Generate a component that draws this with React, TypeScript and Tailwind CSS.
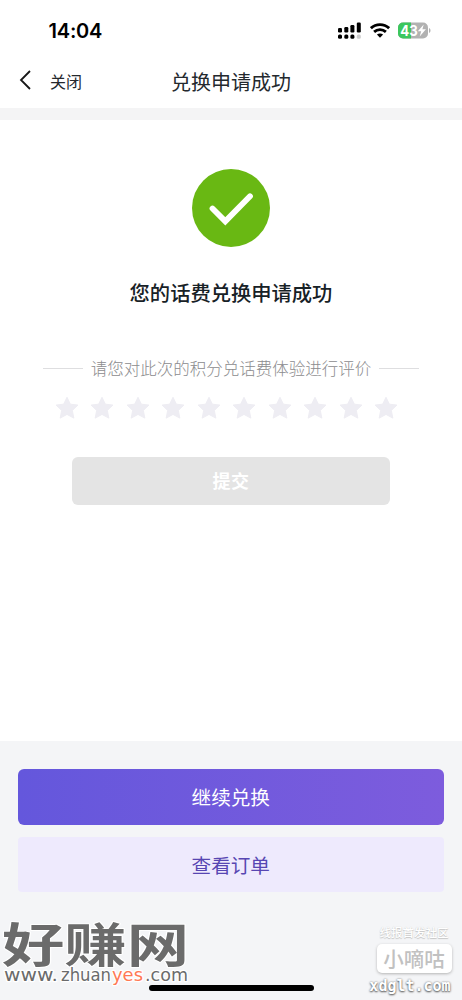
import React from 'react';

const STAR_COUNT = 10;

const SignalIcon: React.FC = () => (
  <svg width="24" height="18" viewBox="0 0 24 18" className="shrink-0">
    <rect x="0" y="6" width="4" height="4.5" rx="1.2" />
    <rect x="6.3" y="5" width="4" height="5.5" rx="1.2" />
    <rect x="12.4" y="3" width="4" height="7.5" rx="1.2" />
    <rect x="18.8" y="0.5" width="4" height="10" rx="1.2" />
    <rect x="0" y="12.5" width="4" height="4.3" rx="1.5" />
    <rect x="6.3" y="12.5" width="4" height="4.3" rx="1.5" />
    <rect x="12.4" y="12.5" width="4" height="4.3" rx="1.5" />
    <rect x="18.8" y="12.5" width="4" height="4.3" rx="1.5" fill="#cfcfcf" />
  </svg>
);

const WifiIcon: React.FC = () => (
  <svg width="20" height="15" viewBox="0 0 20 15" fill="none" stroke="#000" strokeWidth="2.8" className="shrink-0">
    <path d="M0.9 5.2C6 .3 14 .3 19.1 5.2" />
    <path d="M4.1 8.9c3.4-3.1 8.4-3.1 11.8 0" />
    <path d="M6.9 11.6c1.8-1.5 4.4-1.5 6.2 0L10 14.8z" fill="#000" stroke="none" />
  </svg>
);

const BatteryIcon: React.FC = () => (
  <svg width="34" height="17" viewBox="0 0 34 17" className="shrink-0">
    <defs>
      <clipPath id="battery-body">
        <rect x="0" y="0.5" width="30" height="16" rx="5" />
      </clipPath>
    </defs>
    <g clipPath="url(#battery-body)">
      <rect width="30" height="17" fill="#b2b2b2" />
      <rect width="13" height="17" fill="#3bc75d" />
    </g>
    <path d="M31 6v5c2-.7 2-4.3 0-5z" fill="#b2b2b2" />
    <text x="2.3" y="13.8" fontSize="15" fontWeight="700" fontFamily="Inter, sans-serif" fill="#fff" textLength="17.5" lengthAdjust="spacingAndGlyphs">43</text>
    <path d="M25.7 2.5L19.8 9.2h3.4l-1.5 5.3 6.2-7.2h-3.5z" fill="#fff" />
  </svg>
);

const StarIcon: React.FC = () => (
  <svg width="24" height="24" viewBox="0 0 24 24" fill="#eeedf3" stroke="#eeedf3" strokeWidth="1" strokeLinejoin="round">
    <path d="M12 1.3l3.35 6.9 7.55.9-5.6 5.3 1.5 7.7L12 18.4l-6.8 3.7 1.5-7.7-5.6-5.3 7.55-.9z" />
  </svg>
);

const App: React.FC = () => {
  return (
    <div className="relative flex h-[1000px] w-[462px] flex-col overflow-hidden bg-white font-['Noto_Sans_CJK_SC',sans-serif]">
      <div className="flex h-[61px] shrink-0 items-center justify-between pl-[48.5px] pr-[30px]">
        <span className="font-['Inter',sans-serif] text-[20px] font-semibold leading-none tracking-[-0.2px] text-black">14:04</span>
        <div className="flex items-center gap-2">
          <SignalIcon />
          <WifiIcon />
          <BatteryIcon />
        </div>
      </div>

      <header className="grid h-[47px] shrink-0 grid-cols-[1fr_auto_1fr] items-center pb-1.5">
        <button className="flex items-center pl-[19px] text-[16px] leading-none text-[#24282d]">
          <svg width="13" height="20" viewBox="0 0 13 20" fill="none" stroke="#171717" strokeWidth="1.8" className="-mt-1 mr-[18px]">
            <path d="M11 1L2 10l9 9" />
          </svg>
          <span className="-mt-0.5">关闭</span>
        </button>
        <h1 className="pt-px text-[20px] leading-none text-[#24292e]">兑换申请成功</h1>
      </header>
      <div className="h-3 shrink-0 bg-[#f4f4f5]" />

      <main className="flex flex-1 flex-col items-center pt-[49px]">
        <svg width="78" height="78" viewBox="0 0 78 78" fill="none" className="shrink-0">
          <circle cx="39" cy="39" r="39" fill="#69b813" />
          <path d="M20.5 39.5L33.3 52.3 58 27.3" stroke="#fff" strokeWidth="5.8" strokeLinecap="round" />
        </svg>
        <h2 className="mt-[30px] text-[20.3px] font-medium leading-[30px] text-[#172126]">您的话费兑换申请成功</h2>

        <div className="mt-[49px] flex h-6 items-center gap-2">
          <span className="h-px w-10 bg-[#dedee0]" />
          <span className="whitespace-nowrap text-[16.5px] font-light leading-6 text-[#8c8c8e]">请您对此次的积分兑话费体验进行评价</span>
          <span className="h-px w-10 bg-[#dedee0]" />
        </div>
        <div className="mt-4 flex gap-[11.5px] pr-[9.5px]">
          {Array.from({ length: STAR_COUNT }, (_, i) => (
            <StarIcon key={i} />
          ))}
        </div>
        <button className="mt-[36.5px] h-[48.5px] w-[318px] rounded-md bg-[#e4e4e4] text-[18px] font-bold tracking-[0.5px] text-white">提交</button>
      </main>

      <footer className="h-[259px] shrink-0 bg-[#f4f5f7] px-[18px] pt-7">
        <button className="flex h-14 w-[425.5px] items-center justify-center rounded-md bg-linear-to-r from-[#6457dc] to-[#7d5cdd] text-[19.6px] text-white">继续兑换</button>
        <button className="mt-3 flex h-[55px] w-[425.5px] items-center justify-center rounded bg-[#eeeafd] text-[19.6px] text-[#5746b2]">查看订单</button>
      </footer>

      <div className="absolute bottom-[9px] left-[149px] h-1.5 w-[165px] rounded-full bg-black" />

      <svg width="200" height="84" viewBox="0 0 200 84" className="absolute bottom-0 left-0 overflow-visible">
        <g stroke="#fff" strokeWidth="2.5" paintOrder="stroke" strokeLinejoin="round">
          <text transform="translate(2 45.5) scale(1 .76)" fontSize="62" fontWeight="700" fill="#6b6b6b" textLength="187" lengthAdjust="spacingAndGlyphs">好赚网</text>
          <text y="65" fontSize="17" fontFamily="DejaVu Sans, sans-serif" fill="#6b6b6b">
            <tspan x="4" textLength="54" lengthAdjust="spacingAndGlyphs">www.</tspan>
            <tspan x="61" textLength="50" lengthAdjust="spacingAndGlyphs">zhuan</tspan>
            <tspan x="112" textLength="31" lengthAdjust="spacingAndGlyphs" fill="#ff7954">yes</tspan>
            <tspan x="145" textLength="43" lengthAdjust="spacingAndGlyphs">.com</tspan>
          </text>
        </g>
      </svg>

      <div className="absolute bottom-[5px] right-[5px] flex w-[86px] flex-col items-center">
        <span className="whitespace-nowrap text-[11.5px] font-medium leading-[14px] text-white [text-shadow:0_1px_1px_#c4c4c4,0_0_1px_#ccc]">线报首发社区</span>
        <span className="mt-[5px] flex h-[29px] w-[75px] items-center justify-center rounded-[5px] bg-white text-[20.5px] font-medium text-[#c1c1c1] shadow-[0_1px_3px_#b4b4b4]">小嘀咕</span>
        <span className="mt-[5px] pr-2 font-['DejaVu_Sans_Mono',monospace] text-[15px] font-bold leading-[17px] text-white [text-shadow:0_1px_2px_#555,0_0_2px_#888]">xdglt.com</span>
      </div>
    </div>
  );
};

export default App;
